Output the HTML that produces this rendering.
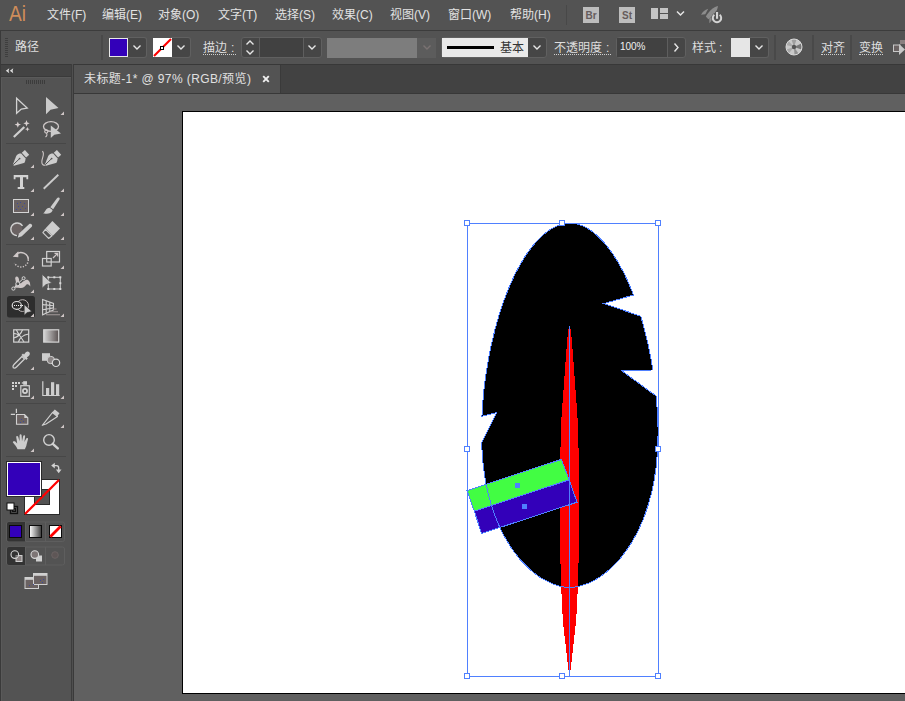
<!DOCTYPE html>
<html><head><meta charset="utf-8"><title>Illustrator</title>
<style>
html,body{margin:0;padding:0}
body{width:905px;height:701px;overflow:hidden;background:#606060;position:relative;font-family:"Liberation Sans","Noto Sans CJK SC",sans-serif;color:#dcdcdc;font-size:12px}
.abs{position:absolute}
#menubar{left:0;top:0;width:905px;height:30px;background:#535353}
#menubar .mi{position:absolute;top:7px;font-size:12px;line-height:16px;color:#e2e2e2;white-space:nowrap}
#ctrl{left:0;top:30px;width:905px;height:34px;background:#535353;border-top:1px solid #3c3c3c;box-sizing:border-box}
#ctrl .lbl{position:absolute;top:8px;font-size:12px;line-height:16px;color:#dedede;white-space:nowrap}
#ctrl .ul{border-bottom:1px dotted #cfcfcf;line-height:16px;height:14px;top:9px}
#ctrl .box{position:absolute;top:6px;height:21px;box-sizing:border-box;border:1px solid #606060;border-radius:3px;background:#464646}
#ctrl .sep{position:absolute;top:4px;width:2px;height:25px;background:#494949;margin-left:-1px}
#tabbar{left:72px;top:64px;width:833px;height:30px;background:#424242;border-top:1px solid #383838;border-bottom:1px solid #383838;box-sizing:border-box}
#tab{left:74px;top:65px;width:206px;height:28px;background:#535353;border-right:1px solid #3a3a3a}
#tools{left:0;top:64px;width:71px;height:637px;background:#535353;border-top:1px solid #383838;box-sizing:border-box}
#toolsR{left:71px;top:64px;width:3px;height:637px;background:linear-gradient(to right,#3d3d3d 0 1px,#4f4f4f 1px 2px,#3a3a3a 2px 3px)}
#edgeL{left:0;top:31px;width:1px;height:670px;background:#3a3a3a}
#artboard{left:182px;top:111px;width:730px;height:583px;background:#fff;border:1px solid #000;box-sizing:border-box}
.tsep{position:absolute;left:6px;width:60px;height:1px;background:#484848}

</style></head><body>
<div id="menubar" class="abs">
<span class="abs" style="left:9px;top:0px;font-size:22.500px;line-height:28px;color:#cf8d5a;transform:scaleX(.85);transform-origin:0 0">Ai</span>
<span class="mi" style="left:47px">文件(F)</span>
<span class="mi" style="left:102px">编辑(E)</span>
<span class="mi" style="left:158px">对象(O)</span>
<span class="mi" style="left:218px">文字(T)</span>
<span class="mi" style="left:275px">选择(S)</span>
<span class="mi" style="left:332px">效果(C)</span>
<span class="mi" style="left:390px">视图(V)</span>
<span class="mi" style="left:448px">窗口(W)</span>
<span class="mi" style="left:510px">帮助(H)</span>
<div class="abs" style="left:566px;top:5px;width:1px;height:20px;background:#484848"></div>
<div class="abs" style="left:583px;top:7px;width:16px;height:16px;background:#bdbdbd;color:#665c5c;font-size:10px;font-weight:bold;line-height:17px;text-align:center">Br</div>
<div class="abs" style="left:619px;top:7px;width:16px;height:16px;background:#bdbdbd;color:#665c5c;font-size:10px;font-weight:bold;line-height:17px;text-align:center">St</div>
<svg class="abs" style="left:650px;top:7px" width="20" height="14" viewBox="0 0 20 14"><rect x="1" y="1" width="7" height="11" fill="#c4c4c4"/><rect x="10" y="1" width="8" height="5" fill="#c4c4c4"/><rect x="10" y="7" width="8" height="5" fill="#c4c4c4"/></svg>
<svg class="abs" style="left:676px;top:10px" width="10" height="8" viewBox="0 0 10 8"><path d="M1 1.5L4.5 5L8 1.5" fill="none" stroke="#e6e6e6" stroke-width="1.5"/></svg>
<svg class="abs" style="left:700px;top:4px" width="24" height="22" viewBox="0 0 24 22"><g fill="#8c8c8c"><path d="M18 2C13.500 3 9 7 5.800 12.500L8.300 15.300C13.500 12 17.500 7 18 2Z"/><path d="M8.200 4.700C5 5.500 2.500 8 1 10.700L5.300 10.200Z"/><path d="M9.300 14.500L9.300 19.200C11 17.700 12.200 15.500 12.600 13.300Z"/></g><circle cx="17" cy="14" r="5.600" fill="#535353"/><path d="M14.300 10.800A4.200 4.200 0 1 0 19.700 10.800" fill="none" stroke="#d4d4d4" stroke-width="2"/><rect x="15.400" y="7.400" width="3.200" height="8" fill="#535353"/><rect x="16" y="8" width="2.100" height="6.800" fill="#d4d4d4"/></svg>
</div>

<div id="ctrl" class="abs">
<div class="abs" style="left:5px;top:7px;width:3px;height:20px;background:repeating-linear-gradient(to bottom,#3e3e3e 0 1px,transparent 1px 2px)"></div>
<span class="lbl" style="left:15px">路径</span>
<div class="sep" style="left:102px"></div>
<!-- fill -->
<div class="box" style="left:127px;width:20px;border-left:0;border-radius:0 3px 3px 0"></div>
<div class="abs" style="left:109px;top:7px;width:19px;height:19px;box-sizing:border-box;border:1px solid #e8e8e8;background:#3300b9"></div>
<svg class="abs chev" style="left:132px;top:13px" width="10" height="7" viewBox="0 0 10 7"><path d="M1.5 1.5L5 5L8.500 1.5" fill="none" stroke="#e6e6e6" stroke-width="1.400"/></svg>
<!-- stroke -->
<div class="box" style="left:171px;width:20px;border-left:0;border-radius:0 3px 3px 0"></div>
<svg class="abs" style="left:153px;top:7px" width="19" height="19" viewBox="0 0 19 19"><rect width="19" height="19" fill="#fff"/><line x1="1" y1="18" x2="18" y2="1" stroke="#f00" stroke-width="2.200"/><rect x="7.500" y="8.500" width="3" height="3" fill="#fff" stroke="#000" stroke-width="1"/></svg>
<svg class="abs chev" style="left:176px;top:13px" width="10" height="7" viewBox="0 0 10 7"><path d="M1.5 1.5L5 5L8.500 1.5" fill="none" stroke="#e6e6e6" stroke-width="1.400"/></svg>
<span class="lbl ul" style="left:203px;width:33px">描边<span style="position:absolute;left:28px">:</span></span>
<!-- stepper -->
<div class="box" style="left:241px;width:81px"></div>
<div class="abs" style="left:260px;top:7px;width:43px;height:19px;background:#414141"></div><div class="abs" style="left:259px;top:7px;width:1px;height:19px;background:#5e5e5e"></div>
<div class="abs" style="left:303px;top:7px;width:1px;height:19px;background:#5e5e5e"></div>
<svg class="abs" style="left:245px;top:9px" width="10" height="17" viewBox="0 0 10 17"><path d="M1.5 4.500L5 1L8.500 4.500M1.5 10.500L5 14L8.500 10.500" fill="none" stroke="#e6e6e6" stroke-width="1.400"/></svg>
<svg class="abs chev" style="left:307px;top:13px" width="10" height="7" viewBox="0 0 10 7"><path d="M1.5 1.5L5 5L8.500 1.5" fill="none" stroke="#e6e6e6" stroke-width="1.400"/></svg>
<!-- disabled var width -->
<div class="abs" style="left:327px;top:7px;width:90px;height:20px;background:#7d7d7d"></div>
<div class="abs" style="left:417px;top:7px;width:19px;height:20px;background:#5c5c5c"></div>
<svg class="abs chev" style="left:422px;top:13px" width="10" height="7" viewBox="0 0 10 7"><path d="M1.5 1.5L5 5L8.500 1.5" fill="none" stroke="#7a7272" stroke-width="1.400"/></svg>
<!-- brush -->
<div class="box" style="left:441px;width:106px"></div>
<div class="abs" style="left:442px;top:7px;width:86px;height:19px;background:#e9e9e9"></div>
<div class="abs" style="left:447px;top:15px;width:47px;height:3px;background:#000"></div>
<span class="abs" style="left:500px;top:9px;font-size:12px;line-height:16px;color:#333">基本</span>
<svg class="abs chev" style="left:532px;top:13px" width="10" height="7" viewBox="0 0 10 7"><path d="M1.5 1.5L5 5L8.500 1.5" fill="none" stroke="#e6e6e6" stroke-width="1.400"/></svg>
<!-- opacity -->
<span class="lbl ul" style="left:554px;width:57px">不透明度<span style="position:absolute;left:52px">:</span></span>
<div class="box" style="left:616px;width:70px"></div>
<div class="abs" style="left:617px;top:7px;width:50px;height:19px;background:#414141"></div><div class="abs" style="left:667px;top:7px;width:1px;height:19px;background:#5e5e5e"></div>
<span class="abs" style="left:620px;top:9px;font-size:10px;letter-spacing:-.1px;line-height:14px;color:#f0f0f0">100%</span>
<svg class="abs" style="left:673px;top:11px" width="7" height="11" viewBox="0 0 7 11"><path d="M1.5 1.5L5 5.500L1.5 9.500" fill="none" stroke="#e6e6e6" stroke-width="1.400"/></svg>
<!-- style -->
<span class="lbl" style="left:692px;top:9px">样式</span><span class="lbl" style="left:719px;top:9px">:</span>
<div class="box" style="left:749px;width:20px;border-left:0;border-radius:0 3px 3px 0"></div>
<div class="abs" style="left:731px;top:7px;width:19px;height:19px;background:#e6e6e6"></div>
<svg class="abs chev" style="left:754px;top:13px" width="10" height="7" viewBox="0 0 10 7"><path d="M1.5 1.5L5 5L8.500 1.5" fill="none" stroke="#e6e6e6" stroke-width="1.400"/></svg>
<div class="sep" style="left:775px"></div>
<!-- wheel -->
<svg class="abs" style="left:785px;top:7px" width="18" height="18" viewBox="0 0 18 18"><circle cx="9" cy="9" r="8" fill="#c9c9c9"/><g fill="#777"><path d="M9 9L6.500 1.500A8 8 0 0 1 11.500 1.500Z" opacity=".5"/><path d="M9 9L16.300 5.500A8 8 0 0 1 16.600 11.500Z"/><path d="M9 9L13.500 15.600A8 8 0 0 1 9.500 17Z" opacity=".7"/><path d="M9 9L4 15.300A8 8 0 0 1 1.500 11.500Z" opacity=".4"/><path d="M9 9L1.300 7A8 8 0 0 1 3.500 3Z" opacity=".4"/></g><circle cx="9" cy="9" r="2.200" fill="#555"/><circle cx="9" cy="9" r="8" fill="none" stroke="#d8d8d8" stroke-width="1"/></svg>
<div class="sep" style="left:813px"></div>
<span class="lbl ul" style="left:821px">对齐</span>
<div class="sep" style="left:851px"></div>
<span class="lbl ul" style="left:859px">变换</span>
<svg class="abs" style="left:892px;top:8px" width="13" height="18" viewBox="0 0 13 18"><rect x="1.5" y="6" width="6.500" height="6.500" fill="#6a6262" stroke="#c8c8c8" stroke-width="1"/><path d="M7 5L7 16L13 10.500Z" fill="#c8c8c8"/><rect x="8" y="1" width="5" height="4" fill="#8a8080"/></svg>
</div>

<div id="tabbar" class="abs"></div>
<div id="tab" class="abs"><span class="abs" style="left:10px;top:6px;white-space:nowrap;font-size:12px;letter-spacing:.4px;line-height:16px;color:#e0e0e0">未标题-1* @ 97% (RGB/预览)</span><svg class="abs" style="left:188px;top:10px" width="8" height="8" viewBox="0 0 8 8"><path d="M1.2 1.2L6.800 6.800M6.800 1.200L1.200 6.800" stroke="#f0f0f0" stroke-width="1.900" fill="none"/></svg></div>
<div id="tools" class="abs"></div>
<div class="abs" style="left:0;top:65px;width:71px;height:11px;background:#434343"></div>
<div class="abs" style="left:0;top:76px;width:71px;height:1px;background:#3a3a3a"></div><div class="abs" style="left:1px;top:77px;width:70px;height:1px;background:#5a5a5a"></div><div class="abs" style="left:1px;top:77px;width:1px;height:624px;background:#5a5a5a"></div>
<svg class="abs" style="left:0;top:64px" width="72" height="637" viewBox="0 64 72 637">
<g fill="#dcdcdc"><path d="M5.800 70.700L9.300 68.200L8.600 70.700L9.300 73.200Z"/><path d="M9.800 70.700L13.300 68.200L12.600 70.700L13.300 73.200Z"/></g>
<g fill="#3c3c3c"><rect x="26" y="80" width="1" height="4"/><rect x="28" y="80" width="1" height="4"/><rect x="30" y="80" width="1" height="4"/><rect x="32" y="80" width="1" height="4"/><rect x="34" y="80" width="1" height="4"/><rect x="36" y="80" width="1" height="4"/><rect x="38" y="80" width="1" height="4"/><rect x="40" y="80" width="1" height="4"/><rect x="42" y="80" width="1" height="4"/><rect x="44" y="80" width="1" height="4"/></g>
<g id="seps" fill="#474747"><rect x="6" y="143" width="60" height="1"/><rect x="6" y="244" width="60" height="1"/><rect x="6" y="321" width="60" height="1"/><rect x="6" y="374" width="60" height="1"/><rect x="6" y="403" width="60" height="1"/><rect x="6" y="456" width="60" height="1"/></g>
<rect x="7" y="296" width="28" height="21.600" rx="2.500" fill="#2d2d2d"/>
<g id="corners" fill="#cfc6c6" transform="translate(0,-.5)">
<path d="M64 112V115.500H60.500Z"/>
<path d="M34 165V168.500H30.500Z"/><path d="M34 189V192.500H30.500Z"/><path d="M64 189V192.500H60.500Z"/>
<path d="M34 213V216.500H30.500Z"/><path d="M64 213V216.500H60.500Z"/><path d="M34 237V240.500H30.500Z"/><path d="M64 237V240.500H60.500Z"/>
<path d="M34 266V269.500H30.500Z"/><path d="M64 266V269.500H60.500Z"/><path d="M34 290V293.500H30.500Z"/>
<path d="M34 314V317.500H30.500Z"/><path d="M64 314V317.500H60.500Z"/>
<path d="M34 367V370.500H30.500Z"/><path d="M34 396V399.500H30.500Z"/><path d="M64 396V399.500H60.500Z"/>
<path d="M64 425V428.500H60.500Z"/><path d="M34 449V452.500H30.500Z"/>
</g>
<!-- ROW1: selection / direct selection -->
<path d="M16.600 98.200V113.200L21.300 109L27.200 108.100Z" fill="none" stroke="#d2d2d2" stroke-width="1.300" stroke-linejoin="miter"/>
<path d="M46 97V114.200L50.500 109.800L58.500 108Z" fill="#cbcbcb"/>
<!-- ROW2: magic wand / lasso -->
<path d="M13.800 137L24.300 127" stroke="#cfcfcf" stroke-width="2.200" fill="none"/>
<g fill="#d8d0d0"><path d="M17.80 121.40L18.70 123.70L21.00 124.60L18.70 125.50L17.80 127.80L16.90 125.50L14.60 124.60L16.90 123.70Z"/><path d="M26.50 120.10L27.40 122.40L29.70 123.30L27.40 124.20L26.50 126.50L25.60 124.20L23.30 123.30L25.60 122.40Z"/><path d="M27.40 126.90L28.04 128.56L29.70 129.20L28.04 129.84L27.40 131.50L26.76 129.84L25.10 129.20L26.76 128.56Z"/></g>
<ellipse cx="51" cy="126.500" rx="7.500" ry="4.800" fill="none" stroke="#cfc8c8" stroke-width="1.300"/>
<circle cx="46.300" cy="131.500" r="1.600" fill="none" stroke="#cfc8c8" stroke-width="1.100"/>
<path d="M46.300 133C47.500 134.500 47 136 45.500 137" fill="none" stroke="#cfc8c8" stroke-width="1.100"/>
<path d="M50.800 125.500V138L54.300 134.700L61 133.500Z" fill="#cbcbcb"/>
<!-- ROW3: pen / curvature -->
<g id="pen"><path d="M12.800 164.800L16.200 156C17.500 154 19.500 153.500 21.200 153.600L25.400 158.200C25.800 160 25 162 23.800 163L14 165.800Z" fill="#cdcdcd"/><path d="M13.200 164.800L19.300 158.900" stroke="#535353" stroke-width="1"/><circle cx="19.600" cy="158.600" r=".9" fill="#535353"/><path d="M21.800 152.700L24.900 149.900L29.200 154.800L26.100 157.500Z" fill="#cdcdcd"/></g>
<g transform="translate(32,0)"><path d="M12.800 164.800L16.200 156C17.500 154 19.500 153.500 21.200 153.600L25.400 158.200C25.800 160 25 162 23.800 163L14 165.800Z" fill="#cdcdcd"/><path d="M13.200 164.800L19.300 158.900" stroke="#535353" stroke-width="1"/><circle cx="19.600" cy="158.600" r=".9" fill="#535353"/><path d="M21.800 152.700L24.900 149.900L29.200 154.800L26.100 157.500Z" fill="#cdcdcd"/></g>
<path d="M42.300 151.300C46 154 40 160 42.300 164C43 165.300 44.500 165.500 45.200 164.800" fill="none" stroke="#cfc8c8" stroke-width="1.100"/>
<!-- ROW4: type / line -->
<path d="M13.700 175H28.200V179.200H26.400V177.200H23V187H24.300V189H17.700V187H20V177.200H15.500V179.200H13.700Z" fill="#d2d2d2"/>
<path d="M43.700 188.700L58.300 174.800" stroke="#cbcbcb" stroke-width="1.900" fill="none"/>
<!-- ROW5: rect / brush -->
<rect x="13.500" y="199.500" width="15" height="13" fill="#6a6262" stroke="#d4d4d4" stroke-width="1"/>
<g fill="#3d4a9a"><rect x="17" y="203" width="1" height="1"/><rect x="20" y="202" width="1" height="1"/><rect x="24" y="203" width="1" height="1"/><rect x="18" y="206" width="1" height="1"/><rect x="22" y="206" width="1" height="1"/><rect x="25" y="208" width="1" height="1"/><rect x="16" y="209" width="1" height="1"/><rect x="20" y="209" width="1" height="1"/></g>
<path d="M58.300 197.600C59.400 197.300 60 198.300 59.500 199.500L53.200 209.300L50.300 207.300L57 198.300C57.400 197.900 57.800 197.700 58.300 197.600Z" fill="#cdcdcd"/>
<path d="M49.600 207.800L52.600 209.900C52.300 212.500 49 214.200 43.200 213.600C45.500 212 45.500 208.200 49.600 207.800Z" fill="#cdcdcd"/>
<!-- ROW6: shaper / eraser -->
<circle cx="16.800" cy="229.300" r="5.500" fill="#6a6262"/>
<path d="M22.500 226A6.300 6.300 0 1 0 17 235.600" fill="none" stroke="#d0d0d0" stroke-width="1.300"/>
<path d="M29 224.300C30 223.500 31 223.700 31.700 224.500C32.400 225.300 32.300 226.200 31.500 227L21.800 236.300L17.700 237.800L19 233.600Z" fill="#cdcdcd"/>
<path d="M52.400 221L60 228.600L52.900 235.800L45.400 228.400Z" fill="#cdcdcd"/>
<path d="M45.400 229.400L52 235.800L48.600 238.400L42.900 232.600Z" fill="none" stroke="#cdcdcd" stroke-width="1.200" stroke-linejoin="round"/>
<!-- ROW7: rotate / scale -->
<path d="M16 254.500A7.300 7.300 0 0 1 28.300 259.800" fill="none" stroke="#cfc8c8" stroke-width="1.500"/>
<path d="M28.300 259.800A7.300 7.300 0 0 1 14.500 263" fill="none" stroke="#cfc8c8" stroke-width="1.500" stroke-dasharray="1.200 1.500"/>
<path d="M12.800 256.800L18.300 251.300L18.300 257.300Z" fill="#cfc8c8"/>
<rect x="46.700" y="251.500" width="12.800" height="10.500" fill="none" stroke="#d0d0d0" stroke-width="1.200"/>
<rect x="42.500" y="258.500" width="8.700" height="7.500" fill="none" stroke="#d0d0d0" stroke-width="1.200"/>
<path d="M53 258L57.500 253.500M54.500 253.300H57.700V256.500" fill="none" stroke="#cfc8c8" stroke-width="1.200"/>
<!-- ROW8: puppet / free transform -->
<path d="M15.500 280C14.500 277.500 16 276 17.500 276.800C19.500 278 19 281 19.500 283.500C21 284 23 281 25.500 280C28 279 30.500 281 30.300 286.500C29.500 285 28 283.500 26.500 284.500C25 286.500 23 288.500 20 288C17.500 287.500 15 287.500 14 288C16 285.500 16.500 283 15.500 280Z" fill="#cdc6c6"/>
<path d="M13.500 288.500L18 283.500L23.500 278.300" stroke="#d6d6d6" stroke-width="1" fill="none"/>
<circle cx="13.400" cy="288.600" r="1.600" fill="#535353" stroke="#d6d6d6" stroke-width="1"/>
<circle cx="17.800" cy="283.800" r="2" fill="#535353" stroke="#d6d6d6" stroke-width="1"/>
<circle cx="23.600" cy="278.200" r="1.500" fill="#535353" stroke="#d6d6d6" stroke-width="1"/>
<rect x="48.300" y="277.300" width="12" height="11.700" fill="none" stroke="#d0d0d0" stroke-width="1"/><g fill="#d8d8d8"><rect x="47.3" y="276.3" width="2" height="2"/><rect x="47.3" y="282.2" width="2" height="2"/><rect x="47.3" y="288.0" width="2" height="2"/><rect x="53.3" y="276.3" width="2" height="2"/><rect x="53.3" y="288.0" width="2" height="2"/><rect x="59.3" y="276.3" width="2" height="2"/><rect x="59.3" y="282.2" width="2" height="2"/><rect x="59.3" y="288.0" width="2" height="2"/></g>
<path d="M42.100 274.200V288.200L46 284.600L51.700 283.100Z" fill="#cdcdcd" stroke="#535353" stroke-width=".8"/>
<!-- ROW9: shape builder (selected) / perspective -->
<circle cx="22.600" cy="305.600" r="5.900" fill="none" stroke="#bdb5b5" stroke-width="1"/>
<ellipse cx="16.800" cy="305.400" rx="4.600" ry="3.900" fill="#2d2d2d" stroke="#dcdcdc" stroke-width="1.200"/>
<g fill="#f4f4f4"><rect x="14" y="305" width="1" height="1"/><rect x="16" y="305" width="1" height="1"/><rect x="18" y="305" width="1" height="1"/><rect x="20" y="305" width="1" height="1"/><rect x="22" y="305" width="1" height="1"/></g>
<path d="M24.200 304.500V315.200L27.200 312.600L31.800 311.500Z" fill="#cdcdcd" stroke="#2d2d2d" stroke-width=".6"/>
<g fill="none" stroke="#d0d0d0" stroke-width="1.100"><path d="M42.600 299.500V314.800L53.500 310V303.500Z"/><path d="M46.200 300.800V313.200M49.800 302.200V311.600M42.600 304.600L53.500 305.700M42.600 309.700L53.500 307.900"/><path d="M46 314.800H60M50 311.800H58M52.500 309H56.500" stroke="#a39a9a"/></g>
<!-- ROW10: mesh / gradient -->
<rect x="13.700" y="329.800" width="15" height="12.300" fill="none" stroke="#d4d4d4" stroke-width="1.200"/>
<path d="M13.700 338C18 337 21 334 22.500 329.800M18.500 342C19.500 338 23 335 28.700 334M16.500 330C17.500 333 20 335.500 24 342M13.700 333.500C16 333.500 18 334 19 336" fill="none" stroke="#d4d4d4" stroke-width="1.100"/>
<defs><linearGradient id="gr1" x1="0" x2="1" y1="0" y2="0"><stop offset="0" stop-color="#d6d6d6"/><stop offset="1" stop-color="#5a5252"/></linearGradient><linearGradient id="gr2" x1="0" x2="1" y1="0" y2="0"><stop offset="0" stop-color="#fff"/><stop offset="1" stop-color="#3a3a3a"/></linearGradient></defs>
<rect x="43.700" y="329.800" width="15" height="12.300" fill="url(#gr1)" stroke="#d4d4d4" stroke-width="1.200"/>
<!-- ROW11: eyedropper / blend -->
<path d="M13.300 367.800C12.500 366.500 13 365.500 14 364.500L22 356.500L24.500 359L16.500 367C15.500 368 14.500 368.500 13.300 367.800Z" fill="none" stroke="#d0d0d0" stroke-width="1.300"/>
<path d="M21.500 355L23 353.500L24 354.500L25.800 352.300C27 351 28.500 351.300 29.300 352.200C30 353 30.200 354.500 29 355.700L26.800 357.500L27.800 358.500L26.300 360Z" fill="#cdcdcd"/>
<rect x="42" y="353.200" width="8" height="7.600" fill="#cdcdcd"/>
<circle cx="50.800" cy="360" r="3.700" fill="#8a8585" stroke="#cfcfcf" stroke-width="1"/>
<circle cx="56" cy="362.800" r="3.700" fill="#535353" stroke="#d8d8d8" stroke-width="1.200"/>
<!-- ROW12: symbol sprayer / graph -->
<g fill="#d2d2d2"><rect x="12" y="382" width="2" height="2"/><rect x="15" y="382" width="2" height="2"/><rect x="18" y="382" width="2" height="2"/><rect x="12" y="385" width="2" height="2"/><rect x="15" y="385" width="2" height="2"/><rect x="12" y="388" width="2" height="2"/></g>
<rect x="20.800" y="385.700" width="8.500" height="10.600" fill="none" stroke="#d2d2d2" stroke-width="1.200"/>
<rect x="23.200" y="381.200" width="3.800" height="3.600" fill="#d2d2d2"/><rect x="21.800" y="382.300" width="2" height="1.300" fill="#d2d2d2"/>
<circle cx="25" cy="391" r="2.100" fill="none" stroke="#d2d2d2" stroke-width="1.700"/>
<path d="M42.800 381.200V395.500H59.600" fill="none" stroke="#d2d2d2" stroke-width="1.200"/>
<g fill="#cdcdcd"><rect x="46" y="388" width="3.200" height="7.500"/><rect x="51" y="382.200" width="3.200" height="13.300"/><rect x="56" y="384.200" width="3.200" height="11.300"/></g>
<!-- ROW13: artboard / slice -->
<path d="M10.800 414.400H15M16.400 408.800V413" fill="none" stroke="#d2d2d2" stroke-width="1.200"/>
<path d="M16.500 414.500H24.500L27.800 417.800V424.300H16.500Z" fill="#6a6262" stroke="#d2d2d2" stroke-width="1.100"/>
<path d="M24.300 414.500V418H27.800Z" fill="#d2d2d2"/>
<g fill="#3d4a9a"><rect x="21" y="419" width="1" height="1"/><rect x="23" y="421" width="1" height="1"/><rect x="20" y="422" width="1" height="1"/></g>
<path d="M42.300 425.300L52.500 412.500L57.500 416.500L46 424Z" fill="none" stroke="#d0d0d0" stroke-width="1.200" stroke-linejoin="round"/>
<path d="M52.300 412.300L54.800 409.500L59.500 413.300L57.300 416.300Z" fill="#cdcdcd"/>
<!-- ROW14: hand / zoom -->
<path d="M17.500 449.200C16.500 446.500 14.500 444.500 12.800 442.300C12.800 441 14.300 440.800 15.300 441.600L17.200 443.500L16.200 437C16.200 435.800 17.800 435.600 18.200 436.800L19.500 441.200L19.600 435.300C19.700 434 21.500 434 21.600 435.300L22 441.200L23.200 436C23.600 434.900 25.200 435.200 25.100 436.400L24.400 442L26.300 438.600C26.900 437.600 28.300 438.200 28 439.300L26.600 444.500C26.300 446.500 25.500 447.800 24.800 449.200Z" fill="#cdcdcd"/>
<circle cx="49" cy="439.900" r="5.300" fill="none" stroke="#d2d2d2" stroke-width="1.400"/>
<path d="M52.800 443.800L57.800 448.400" stroke="#d2d2d2" stroke-width="2.400" stroke-linecap="round" fill="none"/>
<!-- COLORS -->
<rect x="24.500" y="479.500" width="35" height="35" fill="#fff" stroke="#2a2a2a" stroke-width="1"/>
<rect x="34.500" y="489.500" width="15" height="15" fill="#535353" stroke="#2a2a2a" stroke-width="1"/>
<path d="M25 514L59 480" stroke="#f00" stroke-width="2.200"/>
<rect x="6.500" y="461.500" width="35" height="35" fill="#fff" stroke="#2a2a2a" stroke-width="1"/>
<rect x="8" y="463" width="32" height="32" fill="#3300b9"/>
<path d="M54 465.600H56.500Q58.700 465.600 58.700 468V470" fill="none" stroke="#d2d2d2" stroke-width="1.400"/><path d="M51.200 465.600L54.800 462.800V468.400ZM58.700 473.200L55.900 469.600H61.500Z" fill="#d2d2d2"/>
<rect x="10.500" y="506.500" width="7" height="7" fill="#535353" stroke="#111" stroke-width="1.300"/>
<rect x="12.500" y="508.500" width="3" height="3" fill="#535353" stroke="#111" stroke-width="1"/>
<rect x="7" y="503" width="7" height="7" fill="#fff" stroke="#111" stroke-width="1"/>
<!-- mode row -->
<rect x="6.500" y="522" width="58" height="19.500" rx="2" fill="none" stroke="#5e5e5e" stroke-width="1"/>
<path d="M7 524A2 2 0 0 1 9 522H25.500V541.500H9A2 2 0 0 1 7 539.500Z" fill="#333"/>
<path d="M25.500 522V541.500M45.500 522V541.500" stroke="#5e5e5e" stroke-width="1"/>
<rect x="9.500" y="525.500" width="12" height="12" fill="#3300b9" stroke="#0a0a0a" stroke-width="1"/>
<rect x="29.500" y="525.500" width="12" height="12" fill="url(#gr2)" stroke="#0a0a0a" stroke-width="1"/>
<rect x="49.500" y="525.500" width="12" height="12" fill="#fff" stroke="#0a0a0a" stroke-width="1"/>
<path d="M50.300 536.700L60.700 526.300" stroke="#f00" stroke-width="2.800"/>
<!-- draw mode row -->
<rect x="6.500" y="547" width="58" height="18" rx="2" fill="none" stroke="#5e5e5e" stroke-width="1"/>
<path d="M7 549A2 2 0 0 1 9 547H25.500V565H9A2 2 0 0 1 7 563Z" fill="#333"/>
<path d="M25.500 547V565M45.500 547V565" stroke="#5e5e5e" stroke-width="1"/>
<rect x="16" y="555.500" width="6" height="6" fill="#8d8585" stroke="#d0d0d0" stroke-width="1"/>
<circle cx="14.800" cy="554.600" r="3.800" fill="#333" fill-opacity=".5" stroke="#d6d6d6" stroke-width="1.100"/>
<rect x="36" y="555.500" width="6" height="6" fill="#cfcfcf"/>
<circle cx="34.800" cy="554.600" r="3.800" fill="#7d7575" stroke="#d6d6d6" stroke-width="1.100"/>
<circle cx="55" cy="555" r="3.300" fill="#5e5656" stroke="#6b6363" stroke-width="1"/>
<!-- screen mode -->
<rect x="25" y="577.500" width="13.500" height="11" fill="#6a6262" stroke="#d0d0d0" stroke-width="1"/>
<rect x="25" y="577.500" width="13.500" height="2.300" fill="#d0d0d0"/>
<rect x="33.500" y="573.500" width="13.500" height="11" fill="#6a6262" stroke="#d0d0d0" stroke-width="1"/>
<rect x="33.500" y="573.500" width="13.500" height="2.300" fill="#d0d0d0"/>
<g fill="#3d4a9a"><rect x="29" y="585" width="1" height="1"/><rect x="33" y="584" width="1" height="1"/><rect x="40" y="580" width="1" height="1"/><rect x="43" y="579" width="1" height="1"/><rect x="42" y="582" width="1" height="1"/></g>
</svg>

<div id="toolsR" class="abs"></div><div id="edgeL" class="abs"></div>
<div id="artboard" class="abs"></div>
<svg class="abs" style="left:0;top:0" width="905" height="701" viewBox="0 0 905 701" shape-rendering="crispEdges">
<path d="M569.8 223.0L571.3 223.1L572.5 223.2L573.7 223.3L574.9 223.5L576.3 223.8L577.8 224.2L578.7 224.5L582.6 225.9L585.7 227.4L588.2 228.9L590.5 230.3L592.6 231.8L594.4 233.3L596.2 234.8L597.8 236.2L599.4 237.7L600.8 239.2L602.2 240.6L603.6 242.1L604.9 243.6L606.1 245.0L607.3 246.5L608.4 248.0L609.5 249.4L610.6 250.9L611.7 252.4L612.7 253.9L613.7 255.3L614.6 256.8L615.6 258.3L616.5 259.7L617.4 261.2L618.2 262.7L619.1 264.1L619.9 265.6L620.7 267.1L621.5 268.6L622.3 270.0L623.1 271.5L623.8 273.0L624.6 274.4L625.3 275.9L626.0 277.4L626.7 278.8L627.3 280.3L628.0 281.8L628.7 283.2L629.3 284.7L629.9 286.2L630.6 287.7L631.2 289.1L631.8 290.6L632.4 292.1L632.9 293.5L633.5 295.0L604.0 303.5L640.8 316.3L641.2 317.8L641.6 319.3L642.1 320.8L642.5 322.3L642.9 323.8L643.3 325.2L643.7 326.7L644.1 328.2L644.5 329.7L644.9 331.2L645.3 332.7L645.7 334.2L646.0 335.7L646.4 337.2L646.8 338.7L647.1 340.2L647.4 341.7L647.8 343.1L648.1 344.6L648.4 346.1L648.7 347.6L649.1 349.1L649.4 350.6L649.7 352.1L650.0 353.6L650.3 355.1L650.5 356.6L650.8 358.1L651.1 359.6L651.4 361.1L651.6 362.5L651.9 364.0L652.1 365.5L652.4 367.0L652.6 368.5L652.9 370.0L621.0 370.2L656.1 396.0L656.3 397.5L656.4 399.0L656.5 400.5L656.7 402.0L656.8 403.5L656.9 405.0L657.0 406.5L657.1 408.0L657.2 409.5L657.3 411.0L657.4 412.5L657.5 414.0L657.6 415.4L657.6 416.9L657.7 418.4L657.8 419.9L657.8 421.4L657.9 422.9L657.9 424.4L657.9 425.9L658.0 427.4L658.0 428.9L658.0 430.4L658.0 431.9L658.0 433.4L658.0 434.9L658.0 436.4L657.9 437.9L657.9 439.4L657.9 440.9L657.9 442.4L657.8 443.9L657.7 445.4L657.7 446.9L657.6 448.4L657.5 449.9L657.5 451.4L657.4 452.9L657.3 454.3L657.2 455.8L657.0 457.3L656.9 458.8L656.8 460.3L656.6 461.8L656.5 463.3L656.3 464.8L656.1 466.3L656.0 467.8L655.8 469.3L655.6 470.8L655.4 472.3L655.1 473.8L654.9 475.3L654.7 476.8L654.4 478.3L654.2 479.8L653.9 481.3L653.6 482.8L653.3 484.3L653.0 485.8L652.7 487.3L652.4 488.8L652.1 490.3L651.7 491.8L651.4 493.2L651.0 494.7L650.6 496.2L650.2 497.7L649.8 499.2L649.4 500.7L649.0 502.2L648.5 503.7L648.1 505.2L647.6 506.7L647.1 508.2L646.6 509.7L646.1 511.2L645.6 512.7L645.1 514.2L644.5 515.7L643.9 517.2L643.4 518.7L642.8 520.2L642.1 521.7L641.5 523.2L640.8 524.7L640.2 526.2L639.5 527.7L638.8 529.2L638.1 530.6L637.3 532.1L636.6 533.6L635.8 535.1L635.0 536.6L634.1 538.1L633.3 539.6L632.4 541.1L631.5 542.6L630.6 544.1L629.6 545.6L628.7 547.1L627.7 548.6L626.6 550.1L625.5 551.6L624.4 553.1L623.3 554.6L622.1 556.1L620.9 557.6L619.7 559.1L618.4 560.6L617.0 562.1L615.6 563.6L614.2 565.1L612.7 566.6L611.1 568.1L609.4 569.5L607.7 571.0L605.9 572.5L603.9 574.0L601.9 575.5L599.7 577.0L597.4 578.5L594.8 580.0L592.0 581.5L588.8 583.0L585.0 584.5L580.2 586.0L579.0 586.3L577.2 586.7L575.5 587.0L574.1 587.2L572.7 587.4L571.4 587.5L569.8 587.5L569.8 587.5L568.1 587.5L566.8 587.4L565.4 587.2L564.0 587.0L562.3 586.7L560.5 586.3L559.3 586.0L554.5 584.5L550.8 583.0L547.6 581.5L544.7 580.0L542.2 578.5L539.8 577.1L537.7 575.6L535.6 574.1L533.7 572.6L531.9 571.1L530.1 569.6L528.5 568.1L526.9 566.6L525.4 565.1L523.9 563.6L522.6 562.1L521.2 560.6L519.9 559.2L518.7 557.7L517.4 556.2L516.3 554.7L515.1 553.2L514.0 551.7L513.0 550.2L511.9 548.7L510.9 547.2L509.9 545.7L509.0 544.2L508.1 542.7L507.2 541.3L506.3 539.8L505.4 538.3L504.6 536.8L503.8 535.3L503.0 533.8L502.3 532.3L501.5 530.8L500.8 529.3L500.1 527.8L499.4 526.3L498.7 524.8L498.1 523.4L497.4 521.9L496.8 520.4L496.2 518.9L495.6 517.4L495.1 515.9L494.5 514.4L494.0 512.9L493.5 511.4L492.9 509.9L492.4 508.4L492.0 506.9L491.5 505.5L491.0 504.0L490.6 502.5L490.2 501.0L489.7 499.5L489.3 498.0L488.9 496.5L488.6 495.0L488.2 493.5L487.8 492.0L487.5 490.5L487.2 489.0L486.8 487.6L486.5 486.1L486.2 484.6L485.9 483.1L485.6 481.6L485.4 480.1L485.1 478.6L484.9 477.1L484.6 475.6L484.4 474.1L484.2 472.6L484.0 471.1L483.8 469.7L483.6 468.2L483.4 466.7L483.2 465.2L483.1 463.7L482.9 462.2L482.8 460.7L482.6 459.2L482.5 457.7L482.4 456.2L482.3 454.7L482.2 453.2L482.1 451.8L482.0 450.3L481.9 448.8L481.8 447.3L481.8 445.8L481.7 444.3L481.7 442.8L496.8 412.5L481.9 416.4L482.0 414.9L482.0 413.4L482.1 411.9L482.2 410.4L482.3 408.9L482.4 407.4L482.5 405.9L482.6 404.4L482.8 402.9L482.9 401.4L483.0 399.9L483.1 398.4L483.3 396.9L483.4 395.4L483.6 393.9L483.7 392.4L483.9 390.9L484.0 389.4L484.2 387.9L484.4 386.4L484.6 384.9L484.8 383.4L484.9 381.9L485.1 380.4L485.3 378.9L485.5 377.4L485.8 375.9L486.0 374.4L486.2 372.9L486.4 371.4L486.7 369.9L486.9 368.4L487.1 366.9L487.4 365.4L487.6 363.9L487.9 362.4L488.2 360.9L488.4 359.4L488.7 357.9L489.0 356.4L489.3 354.9L489.6 353.4L489.9 351.9L490.2 350.4L490.5 348.9L490.8 347.4L491.1 345.9L491.4 344.4L491.8 342.9L492.1 341.4L492.5 339.9L492.8 338.4L493.2 336.9L493.5 335.4L493.9 333.9L494.3 332.4L494.7 330.9L495.0 329.4L495.4 327.9L495.8 326.4L496.2 324.9L496.7 323.4L497.1 321.9L497.5 320.4L497.9 319.0L498.4 317.5L498.8 316.0L499.3 314.5L499.8 313.0L500.2 311.5L500.7 310.0L501.2 308.5L501.7 307.0L502.2 305.5L502.7 304.0L503.3 302.5L503.8 301.0L504.3 299.5L504.9 298.0L505.4 296.5L506.0 295.0L506.6 293.5L507.2 292.0L507.8 290.5L508.4 289.0L509.0 287.5L509.7 286.0L510.3 284.5L511.0 283.0L511.6 281.5L512.3 280.0L513.0 278.5L513.7 277.0L514.4 275.5L515.2 274.0L515.9 272.5L516.7 271.0L517.5 269.5L518.3 268.0L519.1 266.5L519.9 265.0L520.8 263.5L521.7 262.0L522.6 260.5L523.5 259.0L524.4 257.5L525.4 256.0L526.4 254.5L527.4 253.0L528.5 251.5L529.6 250.0L530.7 248.5L531.8 247.0L533.0 245.5L534.3 244.0L535.6 242.5L536.9 241.0L538.3 239.5L539.8 238.0L541.4 236.5L543.0 235.0L544.8 233.5L546.7 232.0L548.8 230.5L551.1 229.0L553.7 227.5L556.7 226.0L560.7 224.5L561.7 224.2L563.2 223.8L564.6 223.5L565.8 223.3L567.0 223.2L568.2 223.1L569.8 223.0Z" fill="#000"/>
<path d="M569.5 327.0L570.9 330.0L572.5 349.0L573.8 366.0L575.0 383.5L576.3 400.0L577.5 417.7L578.2 435.0L578.7 455.0L578.9 480.0L579.0 500.0L578.9 530.0L578.6 560.0L577.8 587.0L577.0 605.0L576.1 621.0L573.6 643.5L571.5 662.0L570.5 670.0L569.5 675.0L568.5 670.0L567.5 662.0L565.4 643.5L562.9 621.0L562.0 605.0L561.2 587.0L560.4 560.0L560.1 530.0L560.0 500.0L560.1 480.0L560.3 455.0L560.8 435.0L561.5 417.7L562.7 400.0L564.0 383.5L565.2 366.0L566.5 349.0L568.1 330.0Z" fill="#fe0000"/>
<path d="M467 490.600L561.400 459.400L569.200 479.800L474.300 511.200Z" fill="#42fd43"/>
<path d="M474.300 511.200L569.200 479.800L577 502.200L481.600 533.500Z" fill="#3300b9"/>
<g fill="none" stroke="#4f80ff" stroke-width="1">
<path d="M569.8 223.0L571.3 223.1L572.5 223.2L573.7 223.3L574.9 223.5L576.3 223.8L577.8 224.2L578.7 224.5L582.6 225.9L585.7 227.4L588.2 228.9L590.5 230.3L592.6 231.8L594.4 233.3L596.2 234.8L597.8 236.2L599.4 237.7L600.8 239.2L602.2 240.6L603.6 242.1L604.9 243.6L606.1 245.0L607.3 246.5L608.4 248.0L609.5 249.4L610.6 250.9L611.7 252.4L612.7 253.9L613.7 255.3L614.6 256.8L615.6 258.3L616.5 259.7L617.4 261.2L618.2 262.7L619.1 264.1L619.9 265.6L620.7 267.1L621.5 268.6L622.3 270.0L623.1 271.5L623.8 273.0L624.6 274.4L625.3 275.9L626.0 277.4L626.7 278.8L627.3 280.3L628.0 281.8L628.7 283.2L629.3 284.7L629.9 286.2L630.6 287.7L631.2 289.1L631.8 290.6L632.4 292.1L632.9 293.5L633.5 295.0L604.0 303.5L640.8 316.3L641.2 317.8L641.6 319.3L642.1 320.8L642.5 322.3L642.9 323.8L643.3 325.2L643.7 326.7L644.1 328.2L644.5 329.7L644.9 331.2L645.3 332.7L645.7 334.2L646.0 335.7L646.4 337.2L646.8 338.7L647.1 340.2L647.4 341.7L647.8 343.1L648.1 344.6L648.4 346.1L648.7 347.6L649.1 349.1L649.4 350.6L649.7 352.1L650.0 353.6L650.3 355.1L650.5 356.6L650.8 358.1L651.1 359.6L651.4 361.1L651.6 362.5L651.9 364.0L652.1 365.5L652.4 367.0L652.6 368.5L652.9 370.0L621.0 370.2L656.1 396.0L656.3 397.5L656.4 399.0L656.5 400.5L656.7 402.0L656.8 403.5L656.9 405.0L657.0 406.5L657.1 408.0L657.2 409.5L657.3 411.0L657.4 412.5L657.5 414.0L657.6 415.4L657.6 416.9L657.7 418.4L657.8 419.9L657.8 421.4L657.9 422.9L657.9 424.4L657.9 425.9L658.0 427.4L658.0 428.9L658.0 430.4L658.0 431.9L658.0 433.4L658.0 434.9L658.0 436.4L657.9 437.9L657.9 439.4L657.9 440.9L657.9 442.4L657.8 443.9L657.7 445.4L657.7 446.9L657.6 448.4L657.5 449.9L657.5 451.4L657.4 452.9L657.3 454.3L657.2 455.8L657.0 457.3L656.9 458.8L656.8 460.3L656.6 461.8L656.5 463.3L656.3 464.8L656.1 466.3L656.0 467.8L655.8 469.3L655.6 470.8L655.4 472.3L655.1 473.8L654.9 475.3L654.7 476.8L654.4 478.3L654.2 479.8L653.9 481.3L653.6 482.8L653.3 484.3L653.0 485.8L652.7 487.3L652.4 488.8L652.1 490.3L651.7 491.8L651.4 493.2L651.0 494.7L650.6 496.2L650.2 497.7L649.8 499.2L649.4 500.7L649.0 502.2L648.5 503.7L648.1 505.2L647.6 506.7L647.1 508.2L646.6 509.7L646.1 511.2L645.6 512.7L645.1 514.2L644.5 515.7L643.9 517.2L643.4 518.7L642.8 520.2L642.1 521.7L641.5 523.2L640.8 524.7L640.2 526.2L639.5 527.7L638.8 529.2L638.1 530.6L637.3 532.1L636.6 533.6L635.8 535.1L635.0 536.6L634.1 538.1L633.3 539.6L632.4 541.1L631.5 542.6L630.6 544.1L629.6 545.6L628.7 547.1L627.7 548.6L626.6 550.1L625.5 551.6L624.4 553.1L623.3 554.6L622.1 556.1L620.9 557.6L619.7 559.1L618.4 560.6L617.0 562.1L615.6 563.6L614.2 565.1L612.7 566.6L611.1 568.1L609.4 569.5L607.7 571.0L605.9 572.5L603.9 574.0L601.9 575.5L599.7 577.0L597.4 578.5L594.8 580.0L592.0 581.5L588.8 583.0L585.0 584.5L580.2 586.0L579.0 586.3L577.2 586.7L575.5 587.0L574.1 587.2L572.7 587.4L571.4 587.5L569.8 587.5L569.8 587.5L568.1 587.5L566.8 587.4L565.4 587.2L564.0 587.0L562.3 586.7L560.5 586.3L559.3 586.0L554.5 584.5L550.8 583.0L547.6 581.5L544.7 580.0L542.2 578.5L539.8 577.1L537.7 575.6L535.6 574.1L533.7 572.6L531.9 571.1L530.1 569.6L528.5 568.1L526.9 566.6L525.4 565.1L523.9 563.6L522.6 562.1L521.2 560.6L519.9 559.2L518.7 557.7L517.4 556.2L516.3 554.7L515.1 553.2L514.0 551.7L513.0 550.2L511.9 548.7L510.9 547.2L509.9 545.7L509.0 544.2L508.1 542.7L507.2 541.3L506.3 539.8L505.4 538.3L504.6 536.8L503.8 535.3L503.0 533.8L502.3 532.3L501.5 530.8L500.8 529.3L500.1 527.8L499.4 526.3L498.7 524.8L498.1 523.4L497.4 521.9L496.8 520.4L496.2 518.9L495.6 517.4L495.1 515.9L494.5 514.4L494.0 512.9L493.5 511.4L492.9 509.9L492.4 508.4L492.0 506.9L491.5 505.5L491.0 504.0L490.6 502.5L490.2 501.0L489.7 499.5L489.3 498.0L488.9 496.5L488.6 495.0L488.2 493.5L487.8 492.0L487.5 490.5L487.2 489.0L486.8 487.6L486.5 486.1L486.2 484.6L485.9 483.1L485.6 481.6L485.4 480.1L485.1 478.6L484.9 477.1L484.6 475.6L484.4 474.1L484.2 472.6L484.0 471.1L483.8 469.7L483.6 468.2L483.4 466.7L483.2 465.2L483.1 463.7L482.9 462.2L482.8 460.7L482.6 459.2L482.5 457.7L482.4 456.2L482.3 454.7L482.2 453.2L482.1 451.8L482.0 450.3L481.9 448.8L481.8 447.3L481.8 445.8L481.7 444.3L481.7 442.8L496.8 412.5L481.9 416.4L482.0 414.9L482.0 413.4L482.1 411.9L482.2 410.4L482.3 408.9L482.4 407.4L482.5 405.9L482.6 404.4L482.8 402.9L482.9 401.4L483.0 399.9L483.1 398.4L483.3 396.9L483.4 395.4L483.6 393.9L483.7 392.4L483.9 390.9L484.0 389.4L484.2 387.9L484.4 386.4L484.6 384.9L484.8 383.4L484.9 381.9L485.1 380.4L485.3 378.9L485.5 377.4L485.8 375.9L486.0 374.4L486.2 372.9L486.4 371.4L486.7 369.9L486.9 368.4L487.1 366.9L487.4 365.4L487.6 363.9L487.9 362.4L488.2 360.9L488.4 359.4L488.7 357.9L489.0 356.4L489.3 354.9L489.6 353.4L489.9 351.9L490.2 350.4L490.5 348.9L490.8 347.4L491.1 345.9L491.4 344.4L491.8 342.9L492.1 341.4L492.5 339.9L492.8 338.4L493.2 336.9L493.5 335.4L493.9 333.9L494.3 332.4L494.7 330.9L495.0 329.4L495.4 327.9L495.8 326.4L496.2 324.9L496.7 323.4L497.1 321.9L497.5 320.4L497.9 319.0L498.4 317.5L498.8 316.0L499.3 314.5L499.8 313.0L500.2 311.5L500.7 310.0L501.2 308.5L501.7 307.0L502.2 305.5L502.7 304.0L503.3 302.5L503.8 301.0L504.3 299.5L504.9 298.0L505.4 296.5L506.0 295.0L506.6 293.5L507.2 292.0L507.8 290.5L508.4 289.0L509.0 287.5L509.7 286.0L510.3 284.5L511.0 283.0L511.6 281.5L512.3 280.0L513.0 278.5L513.7 277.0L514.4 275.5L515.2 274.0L515.9 272.5L516.7 271.0L517.5 269.5L518.3 268.0L519.1 266.5L519.9 265.0L520.8 263.5L521.7 262.0L522.6 260.5L523.5 259.0L524.4 257.5L525.4 256.0L526.4 254.5L527.4 253.0L528.5 251.5L529.6 250.0L530.7 248.5L531.8 247.0L533.0 245.5L534.3 244.0L535.6 242.5L536.9 241.0L538.3 239.5L539.8 238.0L541.4 236.5L543.0 235.0L544.8 233.5L546.7 232.0L548.8 230.5L551.1 229.0L553.7 227.5L556.7 226.0L560.7 224.5L561.7 224.2L563.2 223.8L564.6 223.5L565.8 223.3L567.0 223.2L568.2 223.1L569.8 223.0Z"/>
<path d="M569.500 326V676"/>
<path d="M467 490.600L561.400 459.400L569.200 479.800L474.300 511.200Z"/>
<path d="M474.300 511.200L569.200 479.800L577 502.200L481.600 533.500Z"/>
<rect x="467.500" y="223.500" width="191" height="453"/>
</g>
<g fill="#4f80ff"><rect x="515" y="483" width="5" height="5"/><rect x="522" y="504" width="5" height="5"/></g>
<g fill="#fff" stroke="#4f80ff" stroke-width="1">
<rect x="464.5" y="220.5" width="5" height="5"/><rect x="559.5" y="220.5" width="5" height="5"/><rect x="655.5" y="220.5" width="5" height="5"/><rect x="464.5" y="446.5" width="5" height="5"/><rect x="655.5" y="446.5" width="5" height="5"/><rect x="464.5" y="673.5" width="5" height="5"/><rect x="559.5" y="673.5" width="5" height="5"/><rect x="655.5" y="673.5" width="5" height="5"/>
</g>
</svg>

</body></html>
